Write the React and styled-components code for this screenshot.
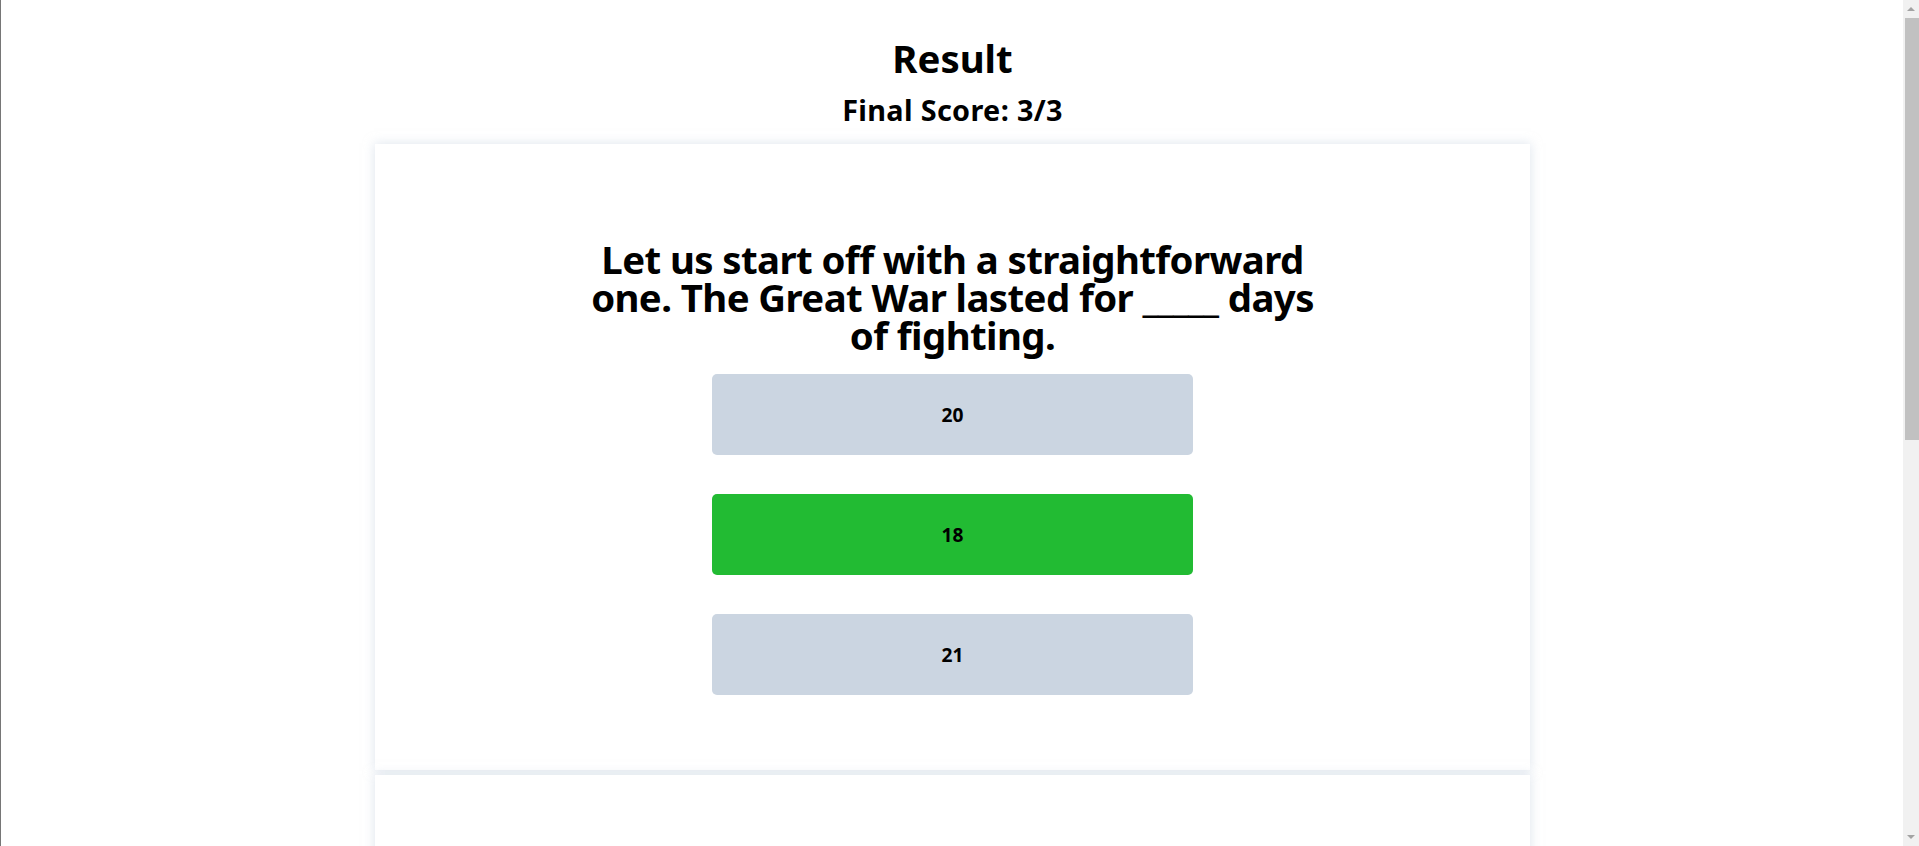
import styled, { createGlobalStyle } from 'styled-components';

const GlobalStyle = createGlobalStyle`
    html {
        border-left: 1px solid #767676;
    }
    body {
        margin: 0;
        padding: 10px 0 0;
        background: #ffffff;
        color: #000000;
        font-family: "Noto Sans", "Open Sans", sans-serif;
    }
`;

const Page = styled.main`
    display: flex;
    flex-direction: column;
    align-items: center;
    padding: 0 15px 105px 0;
`;

const Title = styled.h1`
    margin: 26px 0 0;
    font-size: 38.4px;
    line-height: 44px;
    font-weight: 700;
`;

const Score = styled.h2`
    margin: 13px 0 0;
    font-size: 28.8px;
    line-height: 33px;
    font-weight: 700;
    letter-spacing: 0.35px;
`;

const QuestionList = styled.div`
    display: flex;
    flex-direction: column;
    gap: 5px;
    margin-top: 18px;
    width: 1155px;
`;

const QuestionCard = styled.section`
    display: flex;
    flex-direction: column;
    align-items: center;
    padding: 96px 0 36px;
    background: #ffffff;
    box-shadow: 0 0 10px 1px rgba(203, 213, 225, 0.55);
`;

const Question = styled.h1`
    margin: 0 0 20px;
    max-width: 745px;
    font-size: 38.4px;
    line-height: 38px;
    font-weight: 700;
    letter-spacing: -0.6px;
    text-align: center;
`;

const Answer = styled.button`
    display: flex;
    align-items: center;
    justify-content: center;
    width: 481px;
    height: 81px;
    margin-bottom: 39px;
    border: none;
    border-radius: 5px;
    background: ${props => (props.correct ? '#22bb33' : '#cbd5e1')};
    color: #000000;
    font-family: inherit;
    font-size: 19.2px;
    font-weight: 700;
    cursor: pointer;
`;

// browser chrome: the window's scrollbar, drawn over the page edge
const ScrollTrack = styled.div`
    position: fixed;
    top: 0;
    right: 0;
    display: flex;
    flex-direction: column;
    width: 16px;
    height: 100vh;
    background: #f1f1f1;
`;

const ScrollButton = styled.div`
    display: flex;
    align-items: center;
    justify-content: center;
    height: 18px;
    margin-top: ${props => (props.down ? 'auto' : '0')};
`;

const Arrow = styled.span`
    width: 0;
    height: 0;
    border-left: 4px solid transparent;
    border-right: 4px solid transparent;
    ${props =>
        props.down
            ? 'border-top: 4px solid #a3a3a3;'
            : 'border-bottom: 4px solid #a3a3a3;'}
`;

const ScrollThumb = styled.div`
    height: 422px;
    margin-left: 2px;
    background: #c1c1c1;
`;

const questions = [
    {
        text: 'Let us start off with a straightforward one. The Great War lasted for _____ days of fighting.',
        answers: ['20', '18', '21'],
        correct: 1,
    },
    {
        text: 'Who was appointed the first commander of the Kaurava army?',
        answers: ['Drona', 'Karna', 'Bhishma', 'Shalya'],
        correct: 2,
    },
];

function App() {
    return (
        <Page>
            <GlobalStyle />
            <Title>Result</Title>
            <Score>Final Score: 3/3</Score>
            <QuestionList>
                {questions.map(q => (
                    <QuestionCard key={q.text}>
                        <Question>{q.text}</Question>
                        {q.answers.map((a, i) => (
                            <Answer key={a} correct={i === q.correct}>
                                {a}
                            </Answer>
                        ))}
                    </QuestionCard>
                ))}
            </QuestionList>
            <ScrollTrack>
                <ScrollButton>
                    <Arrow />
                </ScrollButton>
                <ScrollThumb />
                <ScrollButton down>
                    <Arrow down />
                </ScrollButton>
            </ScrollTrack>
        </Page>
    );
}

export default App;
